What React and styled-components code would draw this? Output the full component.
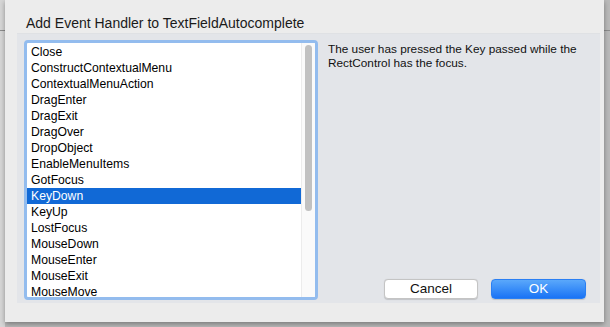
import React from 'react'
import styled, { createGlobalStyle } from 'styled-components'

const Global = createGlobalStyle`
  html, body {
    margin: 0;
    padding: 0;
    width: 610px;
    height: 327px;
    overflow: hidden;
  }
  body {
    font-family: "Liberation Sans", Arial, sans-serif;
    background:
      linear-gradient(to bottom, transparent 30px, #8c8c8c 30px, #8c8c8c 31px, transparent 31px),
      linear-gradient(to right, #d6d6d6 0, #d6d6d6 5px, #b9b9b9 5px);
  }
`

const events = [
  'Close',
  'ConstructContextualMenu',
  'ContextualMenuAction',
  'DragEnter',
  'DragExit',
  'DragOver',
  'DropObject',
  'EnableMenuItems',
  'GotFocus',
  'KeyDown',
  'KeyUp',
  'LostFocus',
  'MouseDown',
  'MouseEnter',
  'MouseExit',
  'MouseMove',
]

export default function App() {
  return (
    <>
      <Global />
      <Sheet>
        <Title>Add Event Handler to TextFieldAutocomplete</Title>
        <Panel>
          <ListBox>
            <List>
              {events.map((e) => (
                <Row key={e} selected={e === 'KeyDown'}>{e}</Row>
              ))}
            </List>
            <Track>
              <Thumb />
            </Track>
          </ListBox>
          <Side>
            <Description>
              The user has pressed the Key passed while the RectControl has the focus.
            </Description>
            <Buttons>
              <Button>Cancel</Button>
              <Button primary>OK</Button>
            </Buttons>
          </Side>
        </Panel>
      </Sheet>
    </>
  )
}

const Sheet = styled.div`
  margin-left: 5px;
  width: 599px;
  height: 322px;
  background: #ececec;
  box-shadow: 0 2px 5px rgba(0, 0, 0, 0.35);
  display: flex;
  flex-direction: column;
  box-sizing: border-box;
`

const Title = styled.div`
  font-size: 14px;
  color: #1a1a1a;
  padding: 15px 0 0 21px;
  height: 18px;
  line-height: 17px;
`

const Panel = styled.div`
  margin: 0 0 0 12px;
  width: 583px;
  height: 270px;
  background: #e3e5e9;
  border-top: 1px solid #dfe1e4;
  box-sizing: border-box;
  padding: 6px 14px 4px 7px;
  display: flex;
`

const ListBox = styled.div`
  flex: 0 0 294px;
  width: 294px;
  height: 260px;
  box-sizing: border-box;
  border: 3px solid #93bcee;
  border-radius: 4px;
  background: #fff;
  display: flex;
  overflow: hidden;
`

const List = styled.div`
  flex: 1;
  padding-top: 1px;
  overflow: hidden;
`

const Row = styled.div`
  height: 16px;
  line-height: 17px;
  font-size: 12.2px;
  padding-left: 4px;
  color: ${(p) => (p.selected ? '#fff' : '#000')};
  background: ${(p) => (p.selected ? '#1169d6' : 'transparent')};
  white-space: nowrap;
`

const Track = styled.div`
  width: 14px;
  border-left: 1px solid #ececec;
  background: #fafafa;
  padding: 2px 3px 0 3px;
  box-sizing: border-box;
`

const Thumb = styled.div`
  width: 7px;
  height: 166px;
  border-radius: 4px;
  background: #c1c1c1;
`

const Side = styled.div`
  flex: 1;
  min-width: 0;
  display: flex;
  flex-direction: column;
  padding-left: 10px;
  padding-top: 2px;
`

const Description = styled.div`
  font-size: 11.8px;
  line-height: 14px;
  color: #111;
  max-width: 258px;
`

const Buttons = styled.div`
  margin-top: auto;
  display: flex;
  justify-content: flex-end;
  gap: 13px;
`

const Button = styled.div`
  width: ${(p) => (p.primary ? '95px' : '94px')};
  height: 20px;
  box-sizing: border-box;
  border-radius: 4px;
  font-size: 13.5px;
  line-height: 18px;
  text-align: center;
  color: ${(p) => (p.primary ? '#fff' : '#111')};
  background: ${(p) =>
    p.primary ? 'linear-gradient(to bottom, #5aa8fb, #1a73f5)' : '#fff'};
  border: 1px solid ${(p) => (p.primary ? '#2a7ff3' : '#c4c4c4')};
  box-shadow: 0 0.5px 1px rgba(0, 0, 0, 0.15);
`
